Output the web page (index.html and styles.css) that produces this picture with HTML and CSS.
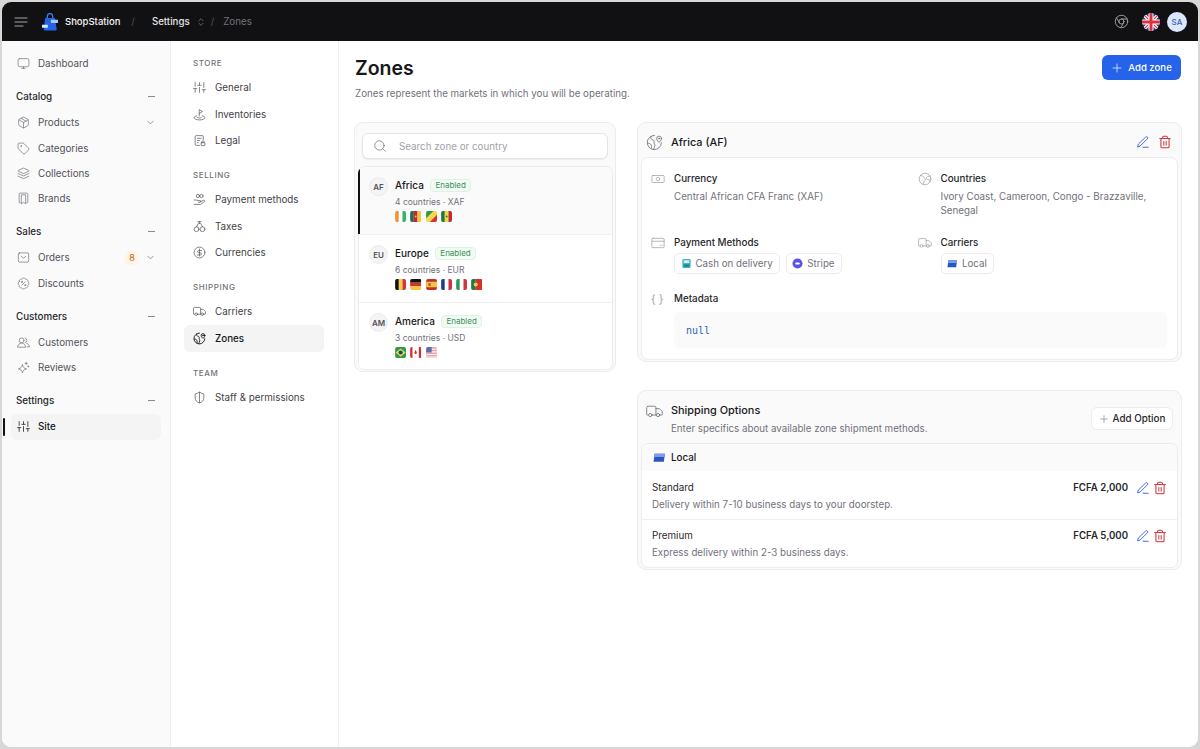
FILE: index.html
```html
<!DOCTYPE html>
<html lang="en">
<head>
	<meta charset="UTF-8" />
	<title>Zones</title>
	<link rel="stylesheet" href="styles.css">
</head>
<body>
	<svg class="sprite" xmlns="http://www.w3.org/2000/svg">
		<symbol id="i-monitor" viewBox="0 0 24 24"><rect x="2" y="3" width="20" height="15" rx="3"/><path d="M9 21h6M12 18v3"/></symbol>
		<symbol id="i-sliders" viewBox="0 0 24 24"><path d="M4 21v-7M4 10V3M12 21v-9M12 8V3M20 21v-5M20 12V3M1 14h6M9 8h6M17 16h6"/></symbol>
		<symbol id="i-flag" viewBox="0 0 24 24"><path d="M11.500 15V3l6 3.500-6 3.500"/><path d="M7 14.500c-3 .7-5 1.900-5 3.300C2 20 6.500 22 12 22s10-2 10-4.200c0-1.400-2-2.600-5-3.300"/><path d="M8 17.500c1 .6 2.300 1 3.800 1s2.800-.4 3.700-1"/></symbol>
		<symbol id="i-legal" viewBox="0 0 24 24"><path d="M19 10V5a2 2 0 0 0-2-2H6a2 2 0 0 0-2 2v14a2 2 0 0 0 2 2h6"/><path d="M8 8h7M8 12h4M8 16h2"/><rect x="15" y="16" width="7" height="5.500" rx="1"/><path d="M16.500 16v-1.500a2 2 0 0 1 4 0V16"/></symbol>
		<symbol id="i-hand" viewBox="0 0 24 24"><circle cx="9" cy="5.500" r="3"/><circle cx="15.500" cy="5.500" r="3"/><path d="M2 13h4l3 1h4a1.500 1.500 0 0 1 0 3h-3"/><path d="m14 16 5-2.500a1.600 1.600 0 0 1 2 2.500l-6 4.500a3 3 0 0 1-2 .5H2"/></symbol>
		<symbol id="i-scale" viewBox="0 0 24 24"><circle cx="6.500" cy="17" r="4.500"/><circle cx="17.500" cy="17" r="4.500"/><path d="M6.500 12.500 10 6h4l3.500 6.500M9 3h6M12 3v3"/></symbol>
		<symbol id="i-dollar" viewBox="0 0 24 24"><circle cx="12" cy="12" r="10"/><path d="M16 8.500h-5.500a2 2 0 1 0 0 4h3a2 2 0 1 1 0 4H8M12 18.500v-13"/></symbol>
		<symbol id="i-truck" viewBox="0 0 24 24"><path d="M14 17V6.500a2 2 0 0 0-2-2H3a2 2 0 0 0-2 2V16a1 1 0 0 0 1 1h1"/><path d="M14 17H9M19.500 17h2.500a1 1 0 0 0 1-1v-3.500a1 1 0 0 0-.2-.6L19 8H14"/><circle cx="17" cy="17" r="2.300"/><circle cx="6" cy="17" r="2.300"/></symbol>
		<symbol id="i-zone" viewBox="0 0 24 24"><path d="M21.800 12.500A10 10 0 1 1 12 2"/><path d="M7 3.500C6 6 8 8 10 8.500c1.500.4 2 1.500 1.500 3-.6 1.800 1 2.500 1 4 0 2-1 4.500-2 6M2.500 13c2 0 3.500.5 4.500 2 1 1.400 1 3 .5 5"/><path d="M22 6.500c0 2.500-3.500 5.500-3.500 5.500S15 9 15 6.500a3.500 3.500 0 0 1 7 0z"/><circle cx="18.500" cy="6.500" r=".8"/></symbol>
		<symbol id="i-shield" viewBox="0 0 24 24"><path d="M20 13c0 5-3.500 7.500-7.660 8.950a1 1 0 0 1-.67-.01C7.500 20.500 4 18 4 13V6a1 1 0 0 1 1-1c2 0 4.500-1.200 6.240-2.720a1.170 1.170 0 0 1 1.520 0C14.510 3.810 17 5 19 5a1 1 0 0 1 1 1zM12 2.500v19"/></symbol>
		<symbol id="i-box" viewBox="0 0 24 24"><path d="M11 21.730a2 2 0 0 0 2 0l7-4A2 2 0 0 0 21 16V8a2 2 0 0 0-1-1.730l-7-4a2 2 0 0 0-2 0l-7 4A2 2 0 0 0 3 8v8a2 2 0 0 0 1 1.730zM12 22V12M3.290 7 12 12l8.710-5M7.500 4.270l9 5.150"/></symbol>
		<symbol id="i-tag" viewBox="0 0 24 24"><path d="M12.586 2.586A2 2 0 0 0 11.172 2H4a2 2 0 0 0-2 2v7.172a2 2 0 0 0 .586 1.414l8.704 8.704a2.426 2.426 0 0 0 3.420 0l6.580-6.580a2.426 2.426 0 0 0 0-3.420z"/><circle cx="7.500" cy="7.500" r=".6"/></symbol>
		<symbol id="i-layers" viewBox="0 0 24 24"><path d="M12.830 2.180a2 2 0 0 0-1.660 0L2.600 6.080a1 1 0 0 0 0 1.830l8.580 3.910a2 2 0 0 0 1.660 0l8.580-3.900a1 1 0 0 0 0-1.830zM2 12l9.170 4.170a2 2 0 0 0 1.660 0L22 12M2 17l9.170 4.170a2 2 0 0 0 1.660 0L22 17"/></symbol>
		<symbol id="i-book" viewBox="0 0 24 24"><path d="M6 20H5.500A1.500 1.500 0 0 1 4 18.500v-14A2.500 2.500 0 0 1 6.500 2h11A2.500 2.500 0 0 1 20 4.500v14a1.500 1.500 0 0 1-1.500 1.500H18"/><path d="M8 6v16l4-3 4 3V6z"/></symbol>
		<symbol id="i-inbox" viewBox="0 0 24 24"><rect x="2.500" y="3.500" width="19" height="17" rx="2"/><path d="m8 10 4 3.500 4-3.500"/></symbol>
		<symbol id="i-percent" viewBox="0 0 24 24"><path d="M3.850 8.620a4 4 0 0 1 4.780-4.770 4 4 0 0 1 6.740 0 4 4 0 0 1 4.780 4.780 4 4 0 0 1 0 6.740 4 4 0 0 1-4.770 4.780 4 4 0 0 1-6.750 0 4 4 0 0 1-4.780-4.770 4 4 0 0 1 0-6.760zM15 9l-6 6"/><circle cx="9" cy="9" r="1"/><circle cx="15" cy="15" r="1"/></symbol>
		<symbol id="i-users" viewBox="0 0 24 24"><circle cx="8.500" cy="8" r="4.500"/><path d="M1 20c.5-3.500 3.500-7 7.500-7s7 3.500 7.500 7z"/><path d="M15 3.700a4.500 4.500 0 0 1 0 8.600M18 13.500c2.700.8 4.500 3.900 5 6.500h-4"/></symbol>
		<symbol id="i-spark" viewBox="0 0 24 24"><path d="M11 5c1 4.500 3 6.500 7.500 7.500C14 13.500 12 15.500 11 20 10 15.500 8 13.500 3.500 12.500 8 11.500 10 9.500 11 5z" transform="translate(-1 2)"/><path d="M17 2.500v4M15 4.500h4M21 9v2M20 10h2"/></symbol>
		<symbol id="i-chevron" viewBox="0 0 24 24"><path d="m6 9 6 6 6-6"/></symbol>
		<symbol id="i-updown" viewBox="0 0 24 24"><path d="m7 15 5 5 5-5M7 9l5-5 5 5"/></symbol>
		<symbol id="i-search" viewBox="0 0 24 24"><circle cx="11" cy="11" r="8"/><path d="m21 21-4.300-4.300"/></symbol>
		<symbol id="i-plus" viewBox="0 0 24 24"><path d="M4 12h16M12 4v16"/></symbol>
		<symbol id="i-chrome" viewBox="0 0 24 24"><circle cx="12" cy="12" r="10"/><circle cx="12" cy="12" r="4"/><path d="M21.170 8H12M3.950 6.060 8.540 14M10.880 21.940 15.460 14"/></symbol>
		<symbol id="i-edit" viewBox="0 0 24 24"><path d="M12 21h9M16.500 3.500a2.120 2.120 0 0 1 3 3L7 19l-4.500 1.500L4 16z"/></symbol>
		<symbol id="i-trash" viewBox="0 0 24 24"><path d="M3 6h18M19 6v14a2 2 0 0 1-2 2H7a2 2 0 0 1-2-2V6M8 6V4a2 2 0 0 1 2-2h4a2 2 0 0 1 2 2v2M10 11v6M14 11v6"/></symbol>
		<symbol id="i-money" viewBox="0 0 24 24"><rect x="1.500" y="6" width="21" height="12" rx="1.500"/><circle cx="12" cy="12" r="3"/></symbol>
		<symbol id="i-globe" viewBox="0 0 24 24"><circle cx="12" cy="12" r="10"/><path d="M4 6c3 0 5 1 6 3s3 2 3 4-2 2-3 4-1 3-1 4M21 7c-3 0-6 1-7 3s2 3 4 3 3 2 3 3"/></symbol>
		<symbol id="i-card" viewBox="0 0 24 24"><rect x="1.500" y="4" width="21" height="16" rx="2"/><path d="M1.500 9h21M16 16h1M19 16h.5"/></symbol>

		<symbol id="f-ci" viewBox="0 0 12 12"><rect width="4" height="12" fill="#f4923a"/><rect x="4" width="4" height="12" fill="#fff"/><rect x="8" width="4" height="12" fill="#3fb06c"/></symbol>
		<symbol id="f-cm" viewBox="0 0 12 12"><rect width="4" height="12" fill="#1f6f55"/><rect x="4" width="4" height="12" fill="#c8242f"/><rect x="8" width="4" height="12" fill="#f6c244"/><circle cx="6" cy="6" r="1" fill="#f6c244"/></symbol>
		<symbol id="f-cg" viewBox="0 0 12 12"><rect width="12" height="12" fill="#f6d84a"/><path d="M0 0h8L0 8z" fill="#2e9a4c"/><path d="M12 12H4l8-8z" fill="#d8322b"/></symbol>
		<symbol id="f-sn" viewBox="0 0 12 12"><rect width="4" height="12" fill="#1c7a3f"/><rect x="4" width="4" height="12" fill="#f3d64a"/><rect x="8" width="4" height="12" fill="#bf2a2a"/><circle cx="6" cy="6" r="1" fill="#1c7a3f"/></symbol>
		<symbol id="f-be" viewBox="0 0 12 12"><rect width="4" height="12" fill="#111"/><rect x="4" width="4" height="12" fill="#f5cf3c"/><rect x="8" width="4" height="12" fill="#d9323a"/></symbol>
		<symbol id="f-de" viewBox="0 0 12 12"><rect width="12" height="4" fill="#111"/><rect y="4" width="12" height="4" fill="#d5312d"/><rect y="8" width="12" height="4" fill="#f6c93c"/></symbol>
		<symbol id="f-es" viewBox="0 0 12 12"><rect width="12" height="12" fill="#c0312b"/><rect y="3" width="12" height="6" fill="#f4c542"/><rect x="2.500" y="4.500" width="2.500" height="3" fill="#b5572a"/></symbol>
		<symbol id="f-fr" viewBox="0 0 12 12"><rect width="4" height="12" fill="#1d3a94"/><rect x="4" width="4" height="12" fill="#fff"/><rect x="8" width="4" height="12" fill="#d0313d"/></symbol>
		<symbol id="f-it" viewBox="0 0 12 12"><rect width="4" height="12" fill="#2c9a5a"/><rect x="4" width="4" height="12" fill="#fff"/><rect x="8" width="4" height="12" fill="#cf3640"/></symbol>
		<symbol id="f-pt" viewBox="0 0 12 12"><rect width="5" height="12" fill="#1f7a46"/><rect x="5" width="7" height="12" fill="#d5312d"/><circle cx="5" cy="6" r="2.200" fill="#f3cf4a"/></symbol>
		<symbol id="f-br" viewBox="0 0 12 12"><rect width="12" height="12" fill="#2f9a4a"/><path d="M6 1.500 11.500 6 6 10.500.5 6z" fill="#f3d54a"/><circle cx="6" cy="6" r="2.300" fill="#24427f"/></symbol>
		<symbol id="f-ca" viewBox="0 0 12 12"><rect width="12" height="12" fill="#fff"/><rect width="2.500" height="12" fill="#d52b36"/><rect x="9.500" width="2.500" height="12" fill="#d52b36"/><path d="M6 3 7.500 6.500 6 8 4.500 6.500z" fill="#d52b36"/></symbol>
		<symbol id="f-us" viewBox="0 0 12 12"><rect width="12" height="12" fill="#e7a9ad"/><path d="M0 2.400h12M0 5.300h12M0 8.200h12M0 11h12" stroke="#fbeeee" stroke-width="1.200"/><rect width="6" height="6" fill="#5a6ea8"/></symbol>
	</svg>

	<div class="app">
		<header class="topbar">
			<svg class="menu-lines" viewBox="0 0 14 10"><path d="M1 1h12M1 5h12M1 9h8"/></svg>
			<svg class="logo" viewBox="0 0 18 20">
				<path d="M6 7V3.500a3 3 0 0 1 6 0V7" fill="none" stroke="#3b7ae8" stroke-width="1.500"/>
				<path d="M3.500 5.500h11l2 12.500a1.500 1.500 0 0 1-1.500 1.700H3.500A1.500 1.500 0 0 1 2 18z" fill="#2563eb"/>
				<path d="M10 7.500h8v3.500h-8z" fill="#a9c8f8"/>
				<path d="M0 13h6.500v3.500H0z" fill="#dbe8fd"/>
			</svg>
			<span class="brand">ShopStation</span>
			<span class="slash slash-brand">/</span>
			<span class="crumb">Settings</span>
			<svg class="ico ico-updown"><use href="#i-updown"/></svg>
			<span class="slash">/</span>
			<span class="crumb-muted">Zones</span>
			<div class="topbar-right">
				<svg class="ico ico-chrome"><use href="#i-chrome"/></svg>
				<svg class="uk" viewBox="0 0 18 18">
					<defs><clipPath id="uk-clip"><circle cx="9" cy="9" r="9"/></clipPath></defs>
					<g clip-path="url(#uk-clip)">
						<rect width="18" height="18" fill="#2b3f8c"/>
						<path d="M0 0l18 18M18 0 0 18" stroke="#fff" stroke-width="3.400"/>
						<path d="M0 0l18 18M18 0 0 18" stroke="#d8323f" stroke-width="1.200"/>
						<path d="M9 0v18M0 9h18" stroke="#fff" stroke-width="5"/>
						<path d="M9 0v18M0 9h18" stroke="#d8323f" stroke-width="3"/>
					</g>
				</svg>
				<span class="me">SA</span>
			</div>
		</header>

		<div class="frame">
			<aside class="side">
				<a class="side-item"><svg class="ico"><use href="#i-monitor"/></svg>Dashboard</a>

				<div class="side-head">Catalog<i class="dash"></i></div>
				<a class="side-item"><svg class="ico"><use href="#i-box"/></svg>Products<svg class="ico ico-chev"><use href="#i-chevron"/></svg></a>
				<a class="side-item"><svg class="ico"><use href="#i-tag"/></svg>Categories</a>
				<a class="side-item"><svg class="ico"><use href="#i-layers"/></svg>Collections</a>
				<a class="side-item"><svg class="ico"><use href="#i-book"/></svg>Brands</a>

				<div class="side-head">Sales<i class="dash"></i></div>
				<a class="side-item"><svg class="ico"><use href="#i-inbox"/></svg>Orders<span class="count">8</span><svg class="ico ico-chev ico-chev-count"><use href="#i-chevron"/></svg></a>
				<a class="side-item"><svg class="ico"><use href="#i-percent"/></svg>Discounts</a>

				<div class="side-head">Customers<i class="dash"></i></div>
				<a class="side-item"><svg class="ico"><use href="#i-users"/></svg>Customers</a>
				<a class="side-item"><svg class="ico"><use href="#i-spark"/></svg>Reviews</a>

				<div class="side-head">Settings<i class="dash"></i></div>
				<a class="side-item side-active"><svg class="ico"><use href="#i-sliders"/></svg>Site</a>
			</aside>

			<nav class="sub">
				<div class="sub-head">STORE</div>
				<a class="sub-item"><svg class="ico"><use href="#i-sliders"/></svg>General</a>
				<a class="sub-item"><svg class="ico"><use href="#i-flag"/></svg>Inventories</a>
				<a class="sub-item"><svg class="ico"><use href="#i-legal"/></svg>Legal</a>
				<div class="sub-head">SELLING</div>
				<a class="sub-item"><svg class="ico"><use href="#i-hand"/></svg>Payment methods</a>
				<a class="sub-item"><svg class="ico"><use href="#i-scale"/></svg>Taxes</a>
				<a class="sub-item"><svg class="ico"><use href="#i-dollar"/></svg>Currencies</a>
				<div class="sub-head">SHIPPING</div>
				<a class="sub-item"><svg class="ico"><use href="#i-truck"/></svg>Carriers</a>
				<a class="sub-item sub-active"><svg class="ico"><use href="#i-zone"/></svg>Zones</a>
				<div class="sub-head">TEAM</div>
				<a class="sub-item"><svg class="ico"><use href="#i-shield"/></svg>Staff &amp; permissions</a>
			</nav>

			<main class="main">
				<div class="page-head">
					<div>
						<h1>Zones</h1>
						<p>Zones represent the markets in which you will be operating.</p>
					</div>
					<button class="btn-primary"><svg class="ico"><use href="#i-plus"/></svg>Add zone</button>
				</div>

				<div class="columns">
					<section class="zones">
						<div class="search"><svg class="ico"><use href="#i-search"/></svg><span>Search zone or country</span></div>
						<div class="zone-list">
							<div class="zone zone-active">
								<span class="avatar">AF</span>
								<div>
									<div class="zone-name">Africa<span class="badge">Enabled</span></div>
									<div class="zone-sub">4 countries · XAF</div>
									<div class="flags">
										<svg><use href="#f-ci"/></svg><svg><use href="#f-cm"/></svg><svg><use href="#f-cg"/></svg><svg><use href="#f-sn"/></svg>
									</div>
								</div>
							</div>
							<div class="zone">
								<span class="avatar">EU</span>
								<div>
									<div class="zone-name">Europe<span class="badge">Enabled</span></div>
									<div class="zone-sub">6 countries · EUR</div>
									<div class="flags">
										<svg><use href="#f-be"/></svg><svg><use href="#f-de"/></svg><svg><use href="#f-es"/></svg><svg><use href="#f-fr"/></svg><svg><use href="#f-it"/></svg><svg><use href="#f-pt"/></svg>
									</div>
								</div>
							</div>
							<div class="zone">
								<span class="avatar">AM</span>
								<div>
									<div class="zone-name">America<span class="badge">Enabled</span></div>
									<div class="zone-sub">3 countries · USD</div>
									<div class="flags">
										<svg><use href="#f-br"/></svg><svg><use href="#f-ca"/></svg><svg><use href="#f-us"/></svg>
									</div>
								</div>
							</div>
						</div>
					</section>

					<div class="details">
						<section class="panel">
							<div class="panel-head">
								<svg class="ico ico-head"><use href="#i-zone"/></svg>
								<span class="panel-title">Africa (AF)</span>
								<div class="actions">
									<svg class="ico ico-edit"><use href="#i-edit"/></svg>
									<svg class="ico ico-trash"><use href="#i-trash"/></svg>
								</div>
							</div>
							<div class="panel-body info">
								<div class="info-grid">
									<div class="info-cell">
										<svg class="ico"><use href="#i-money"/></svg>
										<div>
											<div class="info-label">Currency</div>
											<div class="info-value">Central African CFA Franc (XAF)</div>
										</div>
									</div>
									<div class="info-cell">
										<svg class="ico"><use href="#i-globe"/></svg>
										<div>
											<div class="info-label">Countries</div>
											<div class="info-value">Ivory Coast, Cameroon, Congo - Brazzaville, Senegal</div>
										</div>
									</div>
									<div class="info-cell">
										<svg class="ico"><use href="#i-card"/></svg>
										<div>
											<div class="info-label">Payment Methods</div>
											<div class="chips">
												<span class="chip">
													<svg class="chip-ico" viewBox="0 0 12 12"><rect x="1.500" y="1" width="9" height="10" rx="1.500" fill="#3fb4c4"/><rect x="3" y="2.500" width="6" height="3" fill="#d6f1f5"/><rect x="3" y="7" width="6" height="2.500" fill="#1d7f92"/></svg>
													Cash on delivery
												</span>
												<span class="chip">
													<svg class="chip-ico" viewBox="0 0 12 12"><circle cx="6" cy="6" r="5.500" fill="#5a55e0"/><rect x="3.500" y="5" width="5" height="2" rx="1" fill="#fff"/></svg>
													Stripe
												</span>
											</div>
										</div>
									</div>
									<div class="info-cell">
										<svg class="ico"><use href="#i-truck"/></svg>
										<div>
											<div class="info-label">Carriers</div>
											<div class="chips">
												<span class="chip">
													<svg class="chip-ico" viewBox="0 0 12 10"><path d="M1.500 1.500h9.500l-1 7.500H.5z" fill="#2b55c5"/><path d="M1.500 1.500h9.500l-.4 3H1z" fill="#7c9de8"/></svg>
													Local
												</span>
											</div>
										</div>
									</div>
								</div>
								<div class="meta-row">
									<span class="braces">{ }</span>
									<div class="info-label">Metadata</div>
								</div>
								<pre class="code">null</pre>
							</div>
						</section>

						<section class="panel">
							<div class="panel-head panel-head-tall">
								<svg class="ico ico-head"><use href="#i-truck"/></svg>
								<div class="head-text">
									<div class="panel-title">Shipping Options</div>
									<div class="panel-sub">Enter specifics about available zone shipment methods.</div>
								</div>
								<button class="btn-light"><svg class="ico"><use href="#i-plus"/></svg>Add Option</button>
							</div>
							<div class="panel-body">
								<div class="carrier">
									<svg class="chip-ico" viewBox="0 0 12 10"><path d="M1.500 1.500h9.500l-1 7.500H.5z" fill="#2b55c5"/><path d="M1.500 1.500h9.500l-.4 3H1z" fill="#7c9de8"/></svg>
									Local
								</div>
								<div class="option">
									<div>
										<div class="option-name">Standard</div>
										<div class="option-desc">Delivery within 7-10 business days to your doorstep.</div>
									</div>
									<div class="option-right">
										<span class="price">FCFA 2,000</span>
										<svg class="ico ico-edit"><use href="#i-edit"/></svg>
										<svg class="ico ico-trash"><use href="#i-trash"/></svg>
									</div>
								</div>
								<div class="option">
									<div>
										<div class="option-name">Premium</div>
										<div class="option-desc">Express delivery within 2-3 business days.</div>
									</div>
									<div class="option-right">
										<span class="price">FCFA 5,000</span>
										<svg class="ico ico-edit"><use href="#i-edit"/></svg>
										<svg class="ico ico-trash"><use href="#i-trash"/></svg>
									</div>
								</div>
							</div>
						</section>
					</div>
				</div>
			</main>
		</div>
	</div>
</body>
</html>
```

FILE: styles.css
```css
* {
	box-sizing: border-box;
}
html, body {
	height: 100%;
}
body {
	margin: 0;
	padding: 2px;
	background-color: #d9d7d6;
	font-family: "Inter", "Liberation Sans", sans-serif;
	font-size: 9.8px;
	color: #52525b;
}
.sprite {
	display: none;
}
.ico {
	width: 14px;
	height: 14px;
	flex: none;
	fill: none;
	stroke: currentColor;
	stroke-width: 1.4;
	stroke-linecap: round;
	stroke-linejoin: round;
}
.app {
	height: 100%;
	display: flex;
	flex-direction: column;
	border-radius: 9px;
	overflow: hidden;
	background-color: #fff;
}

/* top bar */
.topbar {
	height: 39px;
	flex: none;
	display: flex;
	align-items: center;
	padding: 0 11px 0 12px;
	background-color: #111113;
	color: #e4e4e7;
}
.menu-lines {
	width: 14px;
	height: 10px;
	fill: none;
	stroke: #a1a1aa;
	stroke-width: 1.2;
	stroke-linecap: round;
}
.logo {
	width: 16px;
	height: 18px;
	margin-left: 14px;
}
.brand {
	margin-left: 7px;
	font-weight: 500;
	font-size: 9.5px;
	color: #f4f4f5;
}
.slash {
	margin: 0 9px 0 0;
	color: #52525b;
}
.slash-brand {
	margin: 0 0 0 11px;
}
.crumb {
	margin-left: 17px;
	font-weight: 500;
	font-size: 9.7px;
	color: #e4e4e7;
}
.ico-updown {
	width: 10px;
	height: 10px;
	margin: 0 4.5px 0 6.5px;
	color: #a1a1aa;
}
.crumb-muted {
	color: #71717a;
}
.topbar-right {
	margin-left: auto;
	display: flex;
	align-items: center;
}
.ico-chrome {
	width: 15px;
	height: 15px;
	color: #a1a1aa;
	stroke-width: 1.5;
}
.uk {
	width: 18px;
	height: 18px;
	margin-left: 13px;
}
.me {
	width: 20px;
	height: 20px;
	margin-left: 7px;
	border-radius: 50%;
	display: flex;
	align-items: center;
	justify-content: center;
	background-color: #dbe7fb;
	color: #3b5bb5;
	font-size: 8px;
	font-weight: 500;
}
.frame {
	flex: 1;
	min-height: 0;
	display: flex;
}

/* main sidebar */
.side {
	width: 169px;
	flex: none;
	padding: 10px 9px 0 9px;
	background-color: #fafafa;
	border-right: 1px solid #efefef;
}
.side-item {
	position: relative;
	height: 25.3px;
	display: flex;
	align-items: center;
	padding-left: 6px;
	border-radius: 6px;
	color: #52525b;
}
.side-item .ico {
	width: 13px;
	height: 13px;
	margin-right: 8px;
	color: #71717a;
	stroke-width: 1.3;
}
.side-item .ico-chev {
	width: 11px;
	height: 11px;
	margin: 0 5px 0 auto;
	stroke-width: 1.5;
}
.side-item .ico-chev-count {
	margin-left: 0;
}
.count {
	width: 14px;
	height: 14px;
	margin: 0 6px 0 auto;
	border-radius: 5px;
	display: flex;
	align-items: center;
	justify-content: center;
	background-color: #fff4e5;
	color: #c2620e;
	font-size: 9px;
}
.side-head {
	height: 26.9px;
	margin-top: 7px;
	display: flex;
	align-items: center;
	justify-content: space-between;
	padding: 0 6px 0 5px;
	color: #27272a;
	font-weight: 500;
}
.dash {
	width: 7px;
	height: 1px;
	background-color: #8a8a92;
}
.side-active {
	background-color: #f4f4f5;
	color: #18181b;
	font-weight: 500;
}
.side-active .ico {
	color: #27272a;
	stroke-width: 1.5;
}
.side-active::before {
	content: "";
	position: absolute;
	left: -8px;
	top: 4px;
	bottom: 4px;
	width: 2px;
	border-radius: 2px;
	background-color: #111113;
}

/* settings sub nav */
.sub {
	width: 168px;
	flex: none;
	padding: 16px 14px 0 13px;
	background-color: #fff;
	border-right: 1px solid #efefef;
}
.sub-head {
	height: 13px;
	margin: 15px 0 4.5px 9px;
	font-size: 8px;
	font-weight: 500;
	letter-spacing: .6px;
	color: #71717a;
	line-height: 13px;
}
.sub-head:first-child {
	margin-top: 0;
}
.sub-item {
	height: 26.5px;
	display: flex;
	align-items: center;
	padding-left: 9px;
	border-radius: 6px;
	color: #3f3f46;
}
.sub-item .ico {
	width: 13px;
	height: 13px;
	margin-right: 9px;
	color: #52525b;
	stroke-width: 1.3;
}
.sub-active {
	background-color: #f4f4f5;
	color: #18181b;
	font-weight: 500;
}
.sub-active .ico {
	color: #18181b;
	stroke-width: 1.7;
}

/* main */
.main {
	flex: 1;
	min-width: 0;
	padding: 14px 16px 0 15px;
}
.page-head {
	display: flex;
	justify-content: space-between;
	align-items: flex-start;
	margin-bottom: 21px;
}
h1 {
	margin: 0 0 0 1px;
	font-size: 19.5px;
	line-height: 26px;
	font-weight: 600;
	color: #18181b;
}
.page-head p {
	margin: 6px 0 0 1px;
	line-height: 14px;
	font-size: 9.75px;
	color: #71717a;
}
.btn-primary {
	height: 25px;
	width: 79px;
	margin-right: 1px;
	display: flex;
	align-items: center;
	justify-content: center;
	border: 0;
	border-radius: 6px;
	background-color: #2563eb;
	color: #fff;
	font-family: inherit;
	font-size: 9.6px;
	font-weight: 500;
}
.btn-primary .ico {
	width: 12px;
	height: 12px;
	margin-right: 5px;
}
.columns {
	display: grid;
	grid-template-columns: 262px 1fr;
	gap: 21px;
	align-items: start;
}

/* zone list */
.zones {
	padding: 3px 2px 1px 3px;
	background-color: #fafafa;
	border: 1px solid #ececee;
	border-radius: 9px;
}
.search {
	height: 26px;
	margin: 7px 5px 7px 4px;
	display: flex;
	align-items: center;
	padding-left: 10px;
	background-color: #fff;
	border: 1px solid #e4e4e7;
	border-radius: 6px;
	color: #a1a1aa;
	box-shadow: 0 1px 1px rgba(0,0,0,.05);
}
.search .ico {
	margin-right: 12px;
	color: #71717a;
	stroke-width: 1.3;
}
.zone-list {
	background-color: #fff;
	border: 1px solid #ececee;
	border-left: 0;
	border-radius: 7px;
	overflow: hidden;
}
.zone {
	height: 68px;
	display: flex;
	padding: 10px 0 0 10px;
	border-top: 1px solid #efeff1;
	border-left: 1px solid #ececee;
}
.zone:first-child {
	height: 67px;
	border-top: 0;
}
.zone:last-child {
	height: 67px;
}
.zone-active {
	background-color: #fafafa;
	border-left: 2px solid #111113;
	padding-left: 9px;
}
.avatar {
	width: 19px;
	height: 19px;
	flex: none;
	margin-right: 7px;
	border-radius: 50%;
	display: flex;
	align-items: center;
	justify-content: center;
	background-color: #f4f4f5;
	border: 1px solid #ececee;
	color: #52525b;
	font-size: 8px;
	font-weight: 600;
}
.zone-name {
	display: flex;
	align-items: center;
	height: 16px;
	color: #18181b;
	font-size: 10px;
	font-weight: 500;
}
.badge {
	height: 13px;
	margin-left: 6.5px;
	padding: 0 4px;
	display: inline-flex;
	align-items: center;
	border: 1px solid #dcf3e2;
	border-radius: 4px;
	background-color: #f1faf3;
	color: #3f8f5a;
	font-size: 8px;
	font-weight: 400;
}
.zone-sub {
	margin-top: 3px;
	line-height: 12px;
	font-size: 8.5px;
	color: #71717a;
}
.flags {
	margin-top: 3px;
	display: flex;
	gap: 4px;
}
.flags svg {
	width: 11.3px;
	height: 11px;
	border-radius: 2px;
}

/* right panels */
.details {
	display: flex;
	flex-direction: column;
	gap: 28px;
}
.panel {
	padding: 0 3px 1px;
	background-color: #fafafa;
	border: 1px solid #ececee;
	border-radius: 9px;
}
.panel-head {
	height: 34px;
	display: flex;
	align-items: center;
	padding: 4px 6px 0 5px;
	color: #71717a;
}
.panel-head-tall {
	height: 52px;
	align-items: flex-start;
	padding-top: 12px;
	padding-right: 5px;
}
.ico-head {
	width: 17px;
	height: 17px;
	margin-right: 8px;
	stroke-width: 1.2;
}
.panel-title {
	color: #18181b;
	font-size: 10.9px;
	font-weight: 500;
}
.head-text {
	flex: 1;
}
.panel-sub {
	margin-top: 5px;
	font-size: 9.75px;
	line-height: 14px;
	color: #71717a;
}
.actions {
	margin-left: auto;
	display: flex;
	gap: 8px;
}
.ico-edit {
	color: #3b62d6;
	stroke-width: 1.6;
}
.ico-trash {
	color: #d0343c;
	stroke-width: 1.8;
}
.btn-light {
	height: 23px;
	width: 82px;
	margin-top: 4px;
	display: flex;
	align-items: center;
	justify-content: center;
	background-color: #fff;
	border: 1px solid #ececee;
	border-radius: 6px;
	color: #27272a;
	font-family: inherit;
	font-size: 9.8px;
	font-weight: 500;
}
.btn-light .ico {
	width: 10px;
	height: 10px;
	margin-right: 4px;
	color: #71717a;
}
.panel-body {
	background-color: #fff;
	border: 1px solid #ececee;
	border-radius: 7px;
	overflow: hidden;
}
.info {
	padding: 14px 10px 11px 9px;
}
.info-grid {
	display: grid;
	grid-template-columns: 266.5px 1fr;
	row-gap: 11px;
}
.info-cell {
	display: flex;
	min-height: 53px;
}
.info-cell > .ico {
	margin-right: 9px;
	color: #a1a1aa;
	stroke-width: 1.3;
}
.info-label {
	line-height: 14px;
	font-weight: 500;
	color: #27272a;
}
.info-value {
	margin-top: 4px;
	line-height: 14px;
	color: #71717a;
}
.chips {
	margin-top: 3px;
	display: flex;
	gap: 6px;
}
.chip {
	height: 21px;
	display: flex;
	align-items: center;
	padding: 0 6px 0 5.5px;
	background-color: #fff;
	border: 1px solid #ececee;
	border-radius: 5px;
	font-size: 9.75px;
	color: #71717a;
}
.chip-ico {
	width: 11px;
	height: 11px;
	flex: none;
	margin-right: 4px;
}
.meta-row {
	margin-top: 3px;
	display: flex;
	align-items: center;
}
.braces {
	width: 14px;
	margin-right: 9px;
	color: #a1a1aa;
	font-size: 11px;
	white-space: pre;
}
.code {
	height: 36px;
	margin: 6px 0 0 23px;
	padding: 0 12px;
	display: flex;
	align-items: center;
	border-radius: 5px;
	background-color: #fafafa;
	color: #2f5fc0;
	font-family: "DejaVu Sans Mono", "Liberation Mono", monospace;
	font-size: 10px;
}
.carrier {
	height: 27px;
	display: flex;
	align-items: center;
	padding-left: 11px;
	background-color: #fafafa;
	color: #18181b;
	font-weight: 500;
}
.carrier .chip-ico {
	width: 13px;
	margin-right: 5px;
}
.option {
	height: 48px;
	display: flex;
	justify-content: space-between;
	padding: 9px 10px 0 10px;
	border-top: 1px solid #efeff1;
}
.carrier + .option {
	border-top: 0;
	padding-top: 10px;
}
.option-name {
	line-height: 14px;
	color: #27272a;
}
.option-desc {
	margin-top: 3px;
	line-height: 14px;
	font-size: 9.75px;
	color: #71717a;
}
.option-right {
	display: flex;
	align-items: flex-start;
}
.price {
	margin-right: 8px;
	line-height: 14px;
	font-size: 9.65px;
	font-weight: 600;
	color: #27272a;
}
.option-right .ico-edit {
	margin-right: 3px;
}
```
